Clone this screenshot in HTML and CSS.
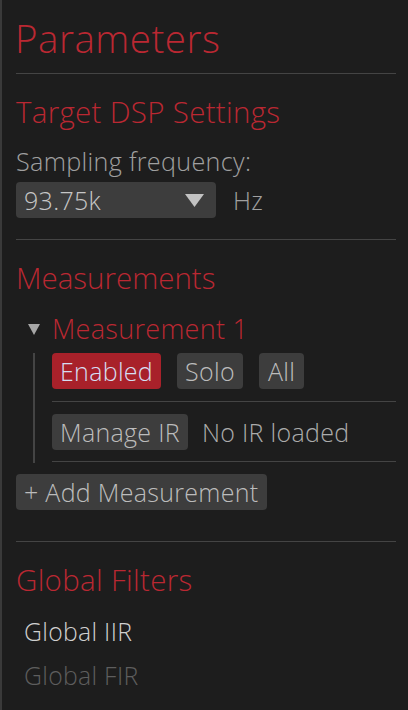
FILE: index.html
```html
<!DOCTYPE html>
<html>
<head>
<meta charset="utf-8">
<link rel="stylesheet" href="styles.css">
</head>
<body>
<div class="panel">
  <h1 class="title">Parameters</h1>
  <hr class="sep">
  <h2 class="heading">Target DSP Settings</h2>
  <div class="label">Sampling frequency:</div>
  <div class="field-row">
    <div class="select">
      <span class="select-value">93.75k</span>
      <svg class="select-arrow" width="19" height="13" viewBox="0 0 19 13"><polygon points="0,0 19,0 9.5,13" fill="#c2c2c2"/></svg>
    </div>
    <span class="unit">Hz</span>
  </div>
  <hr class="sep sep-wide">
  <h2 class="heading heading-tight">Measurements</h2>
  <div class="tree-node">
    <div class="node-head">
      <svg class="node-arrow" width="12" height="11" viewBox="0 0 12 11"><polygon points="0,0 12,0 6,11" fill="#a6a6a6"/></svg>
      <span class="node-title">Measurement 1</span>
    </div>
    <div class="node-body">
      <div class="btn-row">
        <button class="btn btn-active">Enabled</button>
        <button class="btn">Solo</button>
        <button class="btn btn-all">All</button>
      </div>
      <hr class="sep sep-inner">
      <div class="btn-row row-ir">
        <button class="btn">Manage IR</button>
        <span class="status">No IR loaded</span>
      </div>
      <hr class="sep sep-inner sep-last">
    </div>
  </div>
  <button class="btn btn-add">+ Add Measurement</button>
  <hr class="sep sep-bottom">
  <h2 class="heading">Global Filters</h2>
  <ul class="list">
    <li class="list-item">Global IIR</li>
    <li class="list-item list-item-disabled">Global FIR</li>
  </ul>
</div>
</body>
</html>
```
FILE: styles.css
```css
html, body {
  margin: 0;
  padding: 0;
  background: #1d1d1d;
}
body {
  font-family: "Open Sans", "Noto Sans", sans-serif;
  font-weight: 300;
  letter-spacing: 0.3px;
  color: #b5b5b5;
}
.panel {
  box-sizing: border-box;
  min-height: 710px;
  border-left: 2px solid #3a3a3a;
  padding: 16px 12px 0 14px;
}
.title {
  margin: 0 0 13px -1px;
  font-size: 38.5px;
  line-height: 44px;
  height: 44px;
  font-weight: 300;
  letter-spacing: 0.5px;
  color: #ba2832;
}
.sep {
  margin: 0;
  border: 0;
  height: 1px;
  background: #444444;
}
.heading {
  margin: 20px 0 0 0;
  font-size: 29.5px;
  line-height: 36px;
  height: 36px;
  font-weight: 300;
  color: #ba2832;
}
.heading-tight {
  letter-spacing: 0;
}
.label {
  margin-top: 16px;
  font-size: 25.2px;
  line-height: 30px;
  color: #a0a0a0;
}
.field-row {
  margin-top: 6px;
  display: flex;
  align-items: center;
}
.select {
  box-sizing: border-box;
  width: 200px;
  height: 36px;
  border-radius: 4px;
  background: #3d3d3d;
  display: flex;
  align-items: center;
  justify-content: space-between;
  padding: 0 12px 0 8px;
}
.select-value {
  font-size: 25px;
  line-height: 36px;
  color: #c6c6c6;
}
.select-arrow {
  display: block;
  margin-top: 1px;
}
.unit {
  margin-left: 17px;
  font-size: 25px;
  line-height: 36px;
  color: #a0a0a0;
}
.sep-wide {
  margin-top: 21px;
}
.tree-node {
  margin-top: 15px;
}
.node-head {
  display: flex;
  align-items: center;
  height: 36px;
}
.node-arrow {
  display: block;
  margin-left: 12px;
  margin-right: 12px;
}
.node-title {
  font-size: 27px;
  line-height: 36px;
  color: #ba2832;
}
.node-body {
  margin: 6px 0 0 17px;
  border-left: 2px solid #444444;
  padding: 0 0 1px 17px;
}
.btn-row {
  display: flex;
  align-items: center;
  gap: 16px;
  height: 36px;
}
.btn {
  box-sizing: border-box;
  height: 36px;
  margin: 0;
  border: 0;
  border-radius: 4px;
  padding: 0 8px;
  background: #3d3d3d;
  color: #bcbcbc;
  font-family: "Open Sans", "Noto Sans", sans-serif;
  font-size: 25px;
  line-height: 36px;
  font-weight: 300;
  letter-spacing: 0.3px;
}
.btn-all {
  padding: 0 9px;
}
.btn-active {
  background: #a8212a;
  color: #d6def2;
}
.sep-inner {
  margin-top: 12px;
}
.row-ir {
  margin-top: 12px;
  gap: 14px;
}
.sep-last {
  margin-top: 11px;
}
.status {
  font-size: 25px;
  line-height: 36px;
  color: #ababab;
}
.btn-add {
  display: block;
  margin-top: 11px;
  padding: 0 8px;
}
.sep-bottom {
  margin-top: 31px;
}
.list {
  list-style: none;
  margin: 11px 0 0 0;
  padding: 0;
}
.list-item {
  height: 44px;
  padding-left: 8px;
  font-size: 24.8px;
  line-height: 44px;
  color: #d0d0d0;
}
.list-item-disabled {
  color: #5e5e5e;
}
```
